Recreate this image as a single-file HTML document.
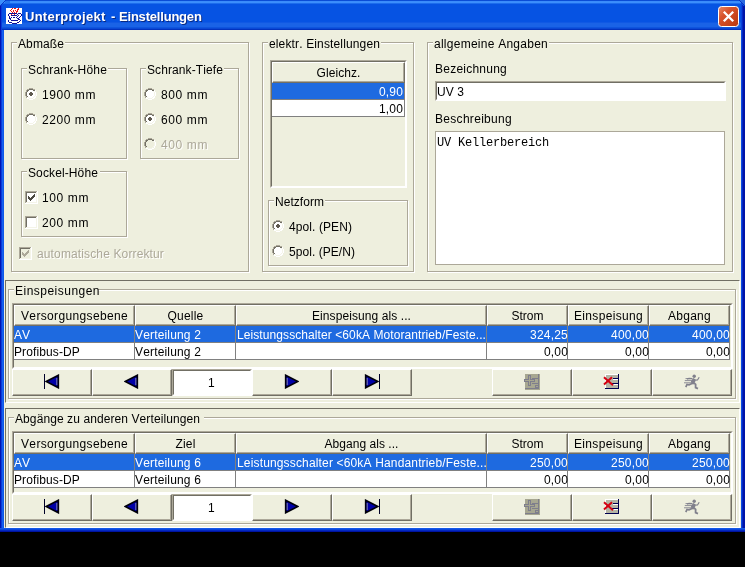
<!DOCTYPE html>
<html><head><meta charset="utf-8"><title>Unterprojekt - Einstellungen</title>
<style>
html,body{margin:0;padding:0;background:#000;}
body{width:745px;height:567px;overflow:hidden;position:relative;font-family:"Liberation Sans",sans-serif;font-size:12px;}
#win{position:absolute;left:0;top:0;width:745px;height:532px;overflow:hidden;
 background:linear-gradient(90deg,#0014B4 0,#0014B4 1px,#0A3CDA 1px,#0A3CDA 2px,#1560F0 2px,#1560F0 3px,#1058E8 3px,#1058E8 4px,#1058E8 741px,#0C4CE0 741px,#0C4CE0 742px,#0428C4 742px,#0428C4 743px,#0014A8 743px,#0014A8 745px);}
#win div,#win span,#win svg{position:absolute;}
#title{left:0;top:0;width:745px;height:30px;
 background:linear-gradient(180deg,#0A4CD6 0px,#0A4CD6 1px,#3A8BFA 1px,#3A8BFA 2px,#3C8EFC 2px,#3C8EFC 3px,#1C6CEC 3px,#1C6CEC 4px,#0653E3 4px,#0653E3 5px,#0653E3 5px,#0653E3 6px,#0653E3 6px,#0653E3 7px,#0653E3 7px,#0653E3 8px,#0653E3 8px,#0653E3 9px,#0653E3 9px,#0653E3 10px,#0653E3 10px,#0653E3 11px,#0653E3 11px,#0653E3 12px,#0653E3 12px,#0653E3 13px,#0653E3 13px,#0653E3 14px,#0653E3 14px,#0653E3 15px,#0653E3 15px,#0653E3 16px,#0653E3 16px,#0653E3 17px,#0653E3 17px,#0653E3 18px,#0653E3 18px,#0653E3 19px,#0653E3 19px,#0653E3 20px,#0653E3 20px,#0653E3 21px,#0653E3 21px,#0653E3 22px,#1059E4 22px,#1059E4 23px,#1A63E6 23px,#1A63E6 24px,#1A63E6 24px,#1A63E6 25px,#1A63E6 25px,#1A63E6 26px,#1A63E6 26px,#1A63E6 27px,#0E55DE 27px,#0E55DE 28px,#0A48D4 28px,#0A48D4 29px,#0232BE 29px,#0232BE 30px);}
.tt{top:9px;font-kerning:none;color:#fff;font-weight:bold;font-size:13px;line-height:16px;white-space:pre;text-shadow:1px 1px 0 #0A2A80;}
#txt{left:0;top:0;width:745px;height:532px;will-change:transform;}
#content{left:4px;top:30px;width:737px;height:498px;background:#EEEFDE;}
#win::after{content:"";position:absolute;left:0;top:528px;width:745px;height:4px;background:linear-gradient(180deg,#1458E6 0,#1458E6 1px,#0A46DC 1px,#0A46DC 2px,#0428C0 2px,#0428C0 3px,#0014A0 3px,#0014A0 4px);}
.t{font-kerning:none;font-variant-ligatures:none;line-height:14px;white-space:pre;font-size:12px;}
.m{font-family:"Liberation Mono",monospace;font-size:12px;letter-spacing:-0.2px;line-height:14px;white-space:pre;color:#000;}
</style></head>
<body>
<div id="win">
<div id="title"></div>
<svg style="left:6px;top:8px" width="16" height="16" viewBox="0 0 16 16" shape-rendering="crispEdges"><rect width="16" height="16" fill="#fff"/><rect x="6" y="0" width="1" height="1" fill="#F01010"/><rect x="8" y="0" width="1" height="1" fill="#F01010"/><rect x="9" y="0" width="1" height="1" fill="#F01010"/><rect x="12" y="0" width="1" height="1" fill="#F01010"/><rect x="5" y="1" width="1" height="1" fill="#F01010"/><rect x="11" y="1" width="1" height="1" fill="#F01010"/><rect x="12" y="1" width="1" height="1" fill="#F01010"/><rect x="4" y="2" width="1" height="1" fill="#F01010"/><rect x="7" y="2" width="1" height="1" fill="#F01010"/><rect x="9" y="2" width="1" height="1" fill="#F01010"/><rect x="11" y="2" width="1" height="1" fill="#F01010"/><rect x="5" y="3" width="1" height="1" fill="#F01010"/><rect x="7" y="3" width="1" height="1" fill="#F01010"/><rect x="10" y="3" width="1" height="1" fill="#F01010"/><rect x="11" y="3" width="1" height="1" fill="#F01010"/><rect x="6" y="4" width="1" height="1" fill="#F01010"/><rect x="8" y="4" width="1" height="1" fill="#F01010"/><rect x="10" y="4" width="1" height="1" fill="#F01010"/><rect x="5" y="6" width="1" height="1" fill="#F01010"/><rect x="8" y="6" width="1" height="1" fill="#F01010"/><rect x="3" y="5" width="1" height="1" fill="#101098"/><rect x="4" y="5" width="1" height="1" fill="#101098"/><rect x="5" y="5" width="1" height="1" fill="#101098"/><rect x="6" y="5" width="1" height="1" fill="#101098"/><rect x="7" y="5" width="1" height="1" fill="#101098"/><rect x="8" y="5" width="1" height="1" fill="#101098"/><rect x="9" y="5" width="1" height="1" fill="#101098"/><rect x="10" y="5" width="1" height="1" fill="#101098"/><rect x="12" y="5" width="1" height="1" fill="#101098"/><rect x="13" y="5" width="1" height="1" fill="#101098"/><rect x="14" y="5" width="1" height="1" fill="#101098"/><rect x="2" y="6" width="1" height="1" fill="#101098"/><rect x="11" y="6" width="1" height="1" fill="#101098"/><rect x="15" y="6" width="1" height="1" fill="#101098"/><rect x="2" y="7" width="1" height="1" fill="#101098"/><rect x="5" y="7" width="1" height="1" fill="#101098"/><rect x="6" y="7" width="1" height="1" fill="#101098"/><rect x="7" y="7" width="1" height="1" fill="#101098"/><rect x="8" y="7" width="1" height="1" fill="#101098"/><rect x="9" y="7" width="1" height="1" fill="#101098"/><rect x="10" y="7" width="1" height="1" fill="#101098"/><rect x="12" y="7" width="1" height="1" fill="#101098"/><rect x="15" y="7" width="1" height="1" fill="#101098"/><rect x="3" y="8" width="1" height="1" fill="#101098"/><rect x="11" y="8" width="1" height="1" fill="#101098"/><rect x="14" y="8" width="1" height="1" fill="#101098"/><rect x="3" y="9" width="1" height="1" fill="#101098"/><rect x="5" y="9" width="1" height="1" fill="#101098"/><rect x="7" y="9" width="1" height="1" fill="#101098"/><rect x="8" y="9" width="1" height="1" fill="#101098"/><rect x="10" y="9" width="1" height="1" fill="#101098"/><rect x="13" y="9" width="1" height="1" fill="#101098"/><rect x="3" y="10" width="1" height="1" fill="#101098"/><rect x="4" y="10" width="1" height="1" fill="#101098"/><rect x="11" y="10" width="1" height="1" fill="#101098"/><rect x="12" y="10" width="1" height="1" fill="#101098"/><rect x="4" y="11" width="1" height="1" fill="#101098"/><rect x="12" y="11" width="1" height="1" fill="#101098"/><rect x="13" y="11" width="1" height="1" fill="#101098"/><rect x="2" y="12" width="1" height="1" fill="#101098"/><rect x="5" y="12" width="1" height="1" fill="#101098"/><rect x="6" y="12" width="1" height="1" fill="#101098"/><rect x="7" y="12" width="1" height="1" fill="#101098"/><rect x="8" y="12" width="1" height="1" fill="#101098"/><rect x="9" y="12" width="1" height="1" fill="#101098"/><rect x="10" y="12" width="1" height="1" fill="#101098"/><rect x="11" y="12" width="1" height="1" fill="#101098"/><rect x="14" y="12" width="1" height="1" fill="#101098"/><rect x="2" y="13" width="1" height="1" fill="#101098"/><rect x="13" y="13" width="1" height="1" fill="#101098"/><rect x="3" y="14" width="1" height="1" fill="#101098"/><rect x="4" y="14" width="1" height="1" fill="#101098"/><rect x="5" y="14" width="1" height="1" fill="#101098"/><rect x="11" y="14" width="1" height="1" fill="#101098"/><rect x="12" y="14" width="1" height="1" fill="#101098"/><rect x="6" y="15" width="1" height="1" fill="#101098"/><rect x="7" y="15" width="1" height="1" fill="#101098"/><rect x="8" y="15" width="1" height="1" fill="#101098"/><rect x="9" y="15" width="1" height="1" fill="#101098"/><rect x="10" y="15" width="1" height="1" fill="#101098"/></svg>
<svg style="left:718px;top:6px" width="21" height="21" viewBox="0 0 21 21">
<defs><linearGradient id="cg" x1="0" y1="0" x2="1" y2="1"><stop offset="0" stop-color="#E88866"/><stop offset="0.35" stop-color="#D8532C"/><stop offset="1" stop-color="#B8370E"/></linearGradient></defs>
<rect x="0.5" y="0.5" width="20" height="20" rx="3" ry="3" fill="url(#cg)" stroke="#fff" stroke-width="1"/>
<path d="M5.800 5.800L15.200 15.200M15.200 5.800L5.800 15.200" stroke="#fff" stroke-width="2.300" stroke-linecap="butt"/>
</svg>
<div id="content"></div>
<div style="left:5px;top:1px;width:5px;height:2px;background:#2272EC;"></div>
<div style="left:0px;top:6px;width:1px;height:24px;background:#0014B4;"></div>
<div style="left:1px;top:5px;width:1px;height:25px;background:#0A3CDA;"></div>
<div style="left:741px;top:3px;width:1px;height:27px;background:#0A44DC;"></div>
<div style="left:742px;top:5px;width:1px;height:25px;background:#0428C4;"></div>
<div style="left:743px;top:6px;width:2px;height:24px;background:#0014A8;"></div>
<svg style="left:0;top:0" width="8" height="8" viewBox="0 0 8 8" shape-rendering="crispEdges"><path d="M0 0h5v1h-1v1h-1v1h-1v1h-1v1h-1z" fill="#3B8FFC"/><path d="M5 0h1v1h-1v1h-1v1h-1v1h-1v1h-1v1h-1v-1h1v-1h1v-1h1v-1h1v-1h1z" fill="#0838C8"/></svg>
<svg style="left:737px;top:0" width="8" height="8" viewBox="0 0 8 8" shape-rendering="crispEdges"><path d="M8 0h-5v1h1v1h1v1h1v1h1v1h1z" fill="#2A6AE0"/><path d="M3 0h-1v1h1v1h1v1h1v1h1v1h1v1h1v-1h-1v-1h-1v-1h-1v-1h-1v-1h-1z" fill="#0830C0"/></svg>
<div style="left:12px;top:43px;width:238px;height:230px;border:1px solid #FFFFFF;box-sizing:border-box;"></div>
<div style="left:11px;top:42px;width:238px;height:230px;border:1px solid #ACA899;box-sizing:border-box;"></div>
<div style="left:17px;top:42px;width:48px;height:2px;background:#EEEFDE;"></div>
<div style="left:22px;top:69px;width:106px;height:91px;border:1px solid #FFFFFF;box-sizing:border-box;"></div>
<div style="left:21px;top:68px;width:106px;height:91px;border:1px solid #ACA899;box-sizing:border-box;"></div>
<div style="left:27px;top:68px;width:81px;height:2px;background:#EEEFDE;"></div>
<svg style="left:25px;top:88px" width="12" height="12" viewBox="0 0 12 12" shape-rendering="crispEdges">
<path d="M4 1h4v1h2v2h1v4h-1v2h-2v1h-4v-1h-2v-2h-1v-4h1v-2h2z" fill="#fff"/>
<path d="M4 0h4v1h-4zM2 1h2v1h-2zM8 1h2v1h-2zM1 2h1v2h-1zM0 4h1v4h-1zM1 8h1v2h-1z" fill="#ACA899"/>
<path d="M4 1h4v1h-4zM2 2h2v1h-2zM8 2h2v1h-2zM2 3h1v1h-1zM1 4h1v4h-1zM2 8h1v1h-1z" fill="#716F64"/>
<path d="M10 2h1v2h-1zM11 4h1v4h-1zM10 8h1v2h-1zM8 10h2v1h-2zM2 10h2v1h-2zM4 11h4v1h-4z" fill="#FFFFFF"/>
<path d="M9 3h1v1h-1zM10 4h1v4h-1zM9 8h1v1h-1zM8 9h1v1h-1zM3 9h1v1h-1zM4 10h4v1h-4z" fill="#F4F4E8"/>
<rect x="5" y="4" width="2" height="4" fill="#5E594F"/><rect x="4" y="5" width="4" height="2" fill="#5E594F"/></svg>
<svg style="left:25px;top:113px" width="12" height="12" viewBox="0 0 12 12" shape-rendering="crispEdges">
<path d="M4 1h4v1h2v2h1v4h-1v2h-2v1h-4v-1h-2v-2h-1v-4h1v-2h2z" fill="#fff"/>
<path d="M4 0h4v1h-4zM2 1h2v1h-2zM8 1h2v1h-2zM1 2h1v2h-1zM0 4h1v4h-1zM1 8h1v2h-1z" fill="#ACA899"/>
<path d="M4 1h4v1h-4zM2 2h2v1h-2zM8 2h2v1h-2zM2 3h1v1h-1zM1 4h1v4h-1zM2 8h1v1h-1z" fill="#716F64"/>
<path d="M10 2h1v2h-1zM11 4h1v4h-1zM10 8h1v2h-1zM8 10h2v1h-2zM2 10h2v1h-2zM4 11h4v1h-4z" fill="#FFFFFF"/>
<path d="M9 3h1v1h-1zM10 4h1v4h-1zM9 8h1v1h-1zM8 9h1v1h-1zM3 9h1v1h-1zM4 10h4v1h-4z" fill="#F4F4E8"/>
</svg>
<div style="left:141px;top:69px;width:99px;height:91px;border:1px solid #FFFFFF;box-sizing:border-box;"></div>
<div style="left:140px;top:68px;width:99px;height:91px;border:1px solid #ACA899;box-sizing:border-box;"></div>
<div style="left:146px;top:68px;width:78px;height:2px;background:#EEEFDE;"></div>
<svg style="left:144px;top:88px" width="12" height="12" viewBox="0 0 12 12" shape-rendering="crispEdges">
<path d="M4 1h4v1h2v2h1v4h-1v2h-2v1h-4v-1h-2v-2h-1v-4h1v-2h2z" fill="#fff"/>
<path d="M4 0h4v1h-4zM2 1h2v1h-2zM8 1h2v1h-2zM1 2h1v2h-1zM0 4h1v4h-1zM1 8h1v2h-1z" fill="#ACA899"/>
<path d="M4 1h4v1h-4zM2 2h2v1h-2zM8 2h2v1h-2zM2 3h1v1h-1zM1 4h1v4h-1zM2 8h1v1h-1z" fill="#716F64"/>
<path d="M10 2h1v2h-1zM11 4h1v4h-1zM10 8h1v2h-1zM8 10h2v1h-2zM2 10h2v1h-2zM4 11h4v1h-4z" fill="#FFFFFF"/>
<path d="M9 3h1v1h-1zM10 4h1v4h-1zM9 8h1v1h-1zM8 9h1v1h-1zM3 9h1v1h-1zM4 10h4v1h-4z" fill="#F4F4E8"/>
</svg>
<svg style="left:144px;top:113px" width="12" height="12" viewBox="0 0 12 12" shape-rendering="crispEdges">
<path d="M4 1h4v1h2v2h1v4h-1v2h-2v1h-4v-1h-2v-2h-1v-4h1v-2h2z" fill="#fff"/>
<path d="M4 0h4v1h-4zM2 1h2v1h-2zM8 1h2v1h-2zM1 2h1v2h-1zM0 4h1v4h-1zM1 8h1v2h-1z" fill="#ACA899"/>
<path d="M4 1h4v1h-4zM2 2h2v1h-2zM8 2h2v1h-2zM2 3h1v1h-1zM1 4h1v4h-1zM2 8h1v1h-1z" fill="#716F64"/>
<path d="M10 2h1v2h-1zM11 4h1v4h-1zM10 8h1v2h-1zM8 10h2v1h-2zM2 10h2v1h-2zM4 11h4v1h-4z" fill="#FFFFFF"/>
<path d="M9 3h1v1h-1zM10 4h1v4h-1zM9 8h1v1h-1zM8 9h1v1h-1zM3 9h1v1h-1zM4 10h4v1h-4z" fill="#F4F4E8"/>
<rect x="5" y="4" width="2" height="4" fill="#5E594F"/><rect x="4" y="5" width="4" height="2" fill="#5E594F"/></svg>
<svg style="left:144px;top:138px" width="12" height="12" viewBox="0 0 12 12" shape-rendering="crispEdges">
<path d="M4 1h4v1h2v2h1v4h-1v2h-2v1h-4v-1h-2v-2h-1v-4h1v-2h2z" fill="#EEEFDE"/>
<path d="M4 0h4v1h-4zM2 1h2v1h-2zM8 1h2v1h-2zM1 2h1v2h-1zM0 4h1v4h-1zM1 8h1v2h-1z" fill="#ACA899"/>
<path d="M4 1h4v1h-4zM2 2h2v1h-2zM8 2h2v1h-2zM2 3h1v1h-1zM1 4h1v4h-1zM2 8h1v1h-1z" fill="#716F64"/>
<path d="M10 2h1v2h-1zM11 4h1v4h-1zM10 8h1v2h-1zM8 10h2v1h-2zM2 10h2v1h-2zM4 11h4v1h-4z" fill="#FFFFFF"/>
<path d="M9 3h1v1h-1zM10 4h1v4h-1zM9 8h1v1h-1zM8 9h1v1h-1zM3 9h1v1h-1zM4 10h4v1h-4z" fill="#F4F4E8"/>
</svg>
<div style="left:22px;top:172px;width:106px;height:66px;border:1px solid #FFFFFF;box-sizing:border-box;"></div>
<div style="left:21px;top:171px;width:106px;height:66px;border:1px solid #ACA899;box-sizing:border-box;"></div>
<div style="left:27px;top:171px;width:73px;height:2px;background:#EEEFDE;"></div>
<svg style="left:25px;top:191px" width="13" height="13" viewBox="0 0 13 13" shape-rendering="crispEdges">
<rect x="0" y="0" width="13" height="13" fill="#FFFFFF"/>
<rect x="0" y="0" width="12" height="12" fill="#ACA899"/>
<rect x="1" y="1" width="11" height="11" fill="#F4F4E8"/>
<rect x="1" y="1" width="10" height="10" fill="#716F64"/>
<rect x="2" y="2" width="9" height="9" fill="#fff"/>
<path d="M3 5h1v3h-1zM4 6h1v3h-1zM5 7h1v3h-1zM6 6h1v3h-1zM7 5h1v3h-1zM8 4h1v3h-1zM9 3h1v3h-1z" fill="#4A4840"/></svg>
<svg style="left:25px;top:216px" width="13" height="13" viewBox="0 0 13 13" shape-rendering="crispEdges">
<rect x="0" y="0" width="13" height="13" fill="#FFFFFF"/>
<rect x="0" y="0" width="12" height="12" fill="#ACA899"/>
<rect x="1" y="1" width="11" height="11" fill="#F4F4E8"/>
<rect x="1" y="1" width="10" height="10" fill="#716F64"/>
<rect x="2" y="2" width="9" height="9" fill="#fff"/>
</svg>
<svg style="left:19px;top:247px" width="13" height="13" viewBox="0 0 13 13" shape-rendering="crispEdges">
<rect x="0" y="0" width="13" height="13" fill="#FFFFFF"/>
<rect x="0" y="0" width="12" height="12" fill="#ACA899"/>
<rect x="1" y="1" width="11" height="11" fill="#F4F4E8"/>
<rect x="1" y="1" width="10" height="10" fill="#716F64"/>
<rect x="2" y="2" width="9" height="9" fill="#EEEFDE"/>
<path d="M3 5h1v3h-1zM4 6h1v3h-1zM5 7h1v3h-1zM6 6h1v3h-1zM7 5h1v3h-1zM8 4h1v3h-1zM9 3h1v3h-1z" fill="#ACA899"/></svg>
<div style="left:263px;top:43px;width:152px;height:230px;border:1px solid #FFFFFF;box-sizing:border-box;"></div>
<div style="left:262px;top:42px;width:152px;height:230px;border:1px solid #ACA899;box-sizing:border-box;"></div>
<div style="left:268px;top:42px;width:113px;height:2px;background:#EEEFDE;"></div>
<div style="left:270px;top:60px;width:137px;height:128px;box-sizing:border-box;border-top:1px solid #ACA899;border-left:1px solid #ACA899;border-bottom:1px solid #FFFFFF;border-right:1px solid #FFFFFF;"></div>
<div style="left:271px;top:61px;width:135px;height:126px;box-sizing:border-box;background:#EEEFDE;border-top:1px solid #716F64;border-left:1px solid #716F64;border-bottom:1px solid #FFFFFF;border-right:1px solid #FFFFFF;"></div>
<div style="left:272px;top:62px;width:133px;height:21px;box-sizing:border-box;background:#EEEFDE;border-top:1px solid #FFFFFF;border-left:1px solid #FFFFFF;border-bottom:1px solid #716F64;border-right:1px solid #716F64;"></div>
<div style="left:273px;top:63px;width:131px;height:19px;box-sizing:border-box;border-bottom:1px solid #ACA899;border-right:1px solid #ACA899;"></div>
<div style="left:272px;top:83px;width:133px;height:16px;background:#1E6AE0;"></div>
<div style="left:272px;top:100px;width:133px;height:17px;background:#fff;border-bottom:1px solid #808080;box-sizing:border-box;"></div>
<div style="left:272px;top:99px;width:133px;height:1px;background:#808080;"></div>
<div style="left:404px;top:83px;width:1px;height:34px;background:#808080;"></div>
<div style="left:269px;top:201px;width:140px;height:66px;border:1px solid #FFFFFF;box-sizing:border-box;"></div>
<div style="left:268px;top:200px;width:140px;height:66px;border:1px solid #ACA899;box-sizing:border-box;"></div>
<div style="left:274px;top:200px;width:51px;height:2px;background:#EEEFDE;"></div>
<svg style="left:272px;top:220px" width="12" height="12" viewBox="0 0 12 12" shape-rendering="crispEdges">
<path d="M4 1h4v1h2v2h1v4h-1v2h-2v1h-4v-1h-2v-2h-1v-4h1v-2h2z" fill="#fff"/>
<path d="M4 0h4v1h-4zM2 1h2v1h-2zM8 1h2v1h-2zM1 2h1v2h-1zM0 4h1v4h-1zM1 8h1v2h-1z" fill="#ACA899"/>
<path d="M4 1h4v1h-4zM2 2h2v1h-2zM8 2h2v1h-2zM2 3h1v1h-1zM1 4h1v4h-1zM2 8h1v1h-1z" fill="#716F64"/>
<path d="M10 2h1v2h-1zM11 4h1v4h-1zM10 8h1v2h-1zM8 10h2v1h-2zM2 10h2v1h-2zM4 11h4v1h-4z" fill="#FFFFFF"/>
<path d="M9 3h1v1h-1zM10 4h1v4h-1zM9 8h1v1h-1zM8 9h1v1h-1zM3 9h1v1h-1zM4 10h4v1h-4z" fill="#F4F4E8"/>
<rect x="5" y="4" width="2" height="4" fill="#5E594F"/><rect x="4" y="5" width="4" height="2" fill="#5E594F"/></svg>
<svg style="left:272px;top:245px" width="12" height="12" viewBox="0 0 12 12" shape-rendering="crispEdges">
<path d="M4 1h4v1h2v2h1v4h-1v2h-2v1h-4v-1h-2v-2h-1v-4h1v-2h2z" fill="#fff"/>
<path d="M4 0h4v1h-4zM2 1h2v1h-2zM8 1h2v1h-2zM1 2h1v2h-1zM0 4h1v4h-1zM1 8h1v2h-1z" fill="#ACA899"/>
<path d="M4 1h4v1h-4zM2 2h2v1h-2zM8 2h2v1h-2zM2 3h1v1h-1zM1 4h1v4h-1zM2 8h1v1h-1z" fill="#716F64"/>
<path d="M10 2h1v2h-1zM11 4h1v4h-1zM10 8h1v2h-1zM8 10h2v1h-2zM2 10h2v1h-2zM4 11h4v1h-4z" fill="#FFFFFF"/>
<path d="M9 3h1v1h-1zM10 4h1v4h-1zM9 8h1v1h-1zM8 9h1v1h-1zM3 9h1v1h-1zM4 10h4v1h-4z" fill="#F4F4E8"/>
</svg>
<div style="left:428px;top:43px;width:306px;height:230px;border:1px solid #FFFFFF;box-sizing:border-box;"></div>
<div style="left:427px;top:42px;width:306px;height:230px;border:1px solid #ACA899;box-sizing:border-box;"></div>
<div style="left:433px;top:42px;width:116px;height:2px;background:#EEEFDE;"></div>
<div style="left:435px;top:81px;width:291px;height:20px;box-sizing:border-box;border-top:1px solid #ACA899;border-left:1px solid #ACA899;border-bottom:1px solid #FFFFFF;border-right:1px solid #FFFFFF;"></div>
<div style="left:436px;top:82px;width:289px;height:18px;box-sizing:border-box;background:#fff;border-top:1px solid #716F64;border-left:1px solid #716F64;border-bottom:1px solid #FFFFFF;border-right:1px solid #FFFFFF;"></div>
<div style="left:435px;top:131px;width:290px;height:134px;box-sizing:border-box;background:#fff;border:1px solid #ACA899;"></div>
<div style="left:5px;top:280px;width:735px;height:123px;box-sizing:border-box;border-top:1px solid #716F64;border-left:1px solid #716F64;border-bottom:1px solid #FFFFFF;border-right:1px solid #FFFFFF;"></div>
<div style="left:9px;top:290px;width:728px;height:110px;border:1px solid #FFFFFF;box-sizing:border-box;"></div>
<div style="left:8px;top:289px;width:728px;height:110px;border:1px solid #ACA899;box-sizing:border-box;"></div>
<div style="left:14px;top:289px;width:84px;height:2px;background:#EEEFDE;"></div>
<div style="left:12px;top:303px;width:721px;height:66px;box-sizing:border-box;border-top:1px solid #ACA899;border-left:1px solid #ACA899;border-bottom:1px solid #FFFFFF;border-right:1px solid #FFFFFF;"></div>
<div style="left:13px;top:304px;width:719px;height:64px;box-sizing:border-box;background:#EEEFDE;border-top:1px solid #716F64;border-left:1px solid #716F64;border-bottom:1px solid #FFFFFF;border-right:1px solid #FFFFFF;"></div>
<div style="left:14px;top:305px;width:121px;height:21px;box-sizing:border-box;background:#EEEFDE;border-top:1px solid #FFFFFF;border-left:1px solid #FFFFFF;border-bottom:1px solid #716F64;border-right:1px solid #716F64;"></div>
<div style="left:15px;top:306px;width:119px;height:19px;box-sizing:border-box;border-bottom:1px solid #ACA899;border-right:1px solid #ACA899;"></div>
<div style="left:135px;top:305px;width:101px;height:21px;box-sizing:border-box;background:#EEEFDE;border-top:1px solid #FFFFFF;border-left:1px solid #FFFFFF;border-bottom:1px solid #716F64;border-right:1px solid #716F64;"></div>
<div style="left:136px;top:306px;width:99px;height:19px;box-sizing:border-box;border-bottom:1px solid #ACA899;border-right:1px solid #ACA899;"></div>
<div style="left:236px;top:305px;width:251px;height:21px;box-sizing:border-box;background:#EEEFDE;border-top:1px solid #FFFFFF;border-left:1px solid #FFFFFF;border-bottom:1px solid #716F64;border-right:1px solid #716F64;"></div>
<div style="left:237px;top:306px;width:249px;height:19px;box-sizing:border-box;border-bottom:1px solid #ACA899;border-right:1px solid #ACA899;"></div>
<div style="left:487px;top:305px;width:81px;height:21px;box-sizing:border-box;background:#EEEFDE;border-top:1px solid #FFFFFF;border-left:1px solid #FFFFFF;border-bottom:1px solid #716F64;border-right:1px solid #716F64;"></div>
<div style="left:488px;top:306px;width:79px;height:19px;box-sizing:border-box;border-bottom:1px solid #ACA899;border-right:1px solid #ACA899;"></div>
<div style="left:568px;top:305px;width:81px;height:21px;box-sizing:border-box;background:#EEEFDE;border-top:1px solid #FFFFFF;border-left:1px solid #FFFFFF;border-bottom:1px solid #716F64;border-right:1px solid #716F64;"></div>
<div style="left:569px;top:306px;width:79px;height:19px;box-sizing:border-box;border-bottom:1px solid #ACA899;border-right:1px solid #ACA899;"></div>
<div style="left:649px;top:305px;width:81px;height:21px;box-sizing:border-box;background:#EEEFDE;border-top:1px solid #FFFFFF;border-left:1px solid #FFFFFF;border-bottom:1px solid #716F64;border-right:1px solid #716F64;"></div>
<div style="left:650px;top:306px;width:79px;height:19px;box-sizing:border-box;border-bottom:1px solid #ACA899;border-right:1px solid #ACA899;"></div>
<div style="left:14px;top:326px;width:716px;height:17px;background:#1E6AE0;"></div>
<div style="left:14px;top:343px;width:716px;height:17px;background:#fff;"></div>
<div style="left:14px;top:342px;width:716px;height:1px;background:#808080;"></div>
<div style="left:14px;top:359px;width:716px;height:1px;background:#808080;"></div>
<div style="left:134px;top:326px;width:1px;height:34px;background:#808080;"></div>
<div style="left:235px;top:326px;width:1px;height:34px;background:#808080;"></div>
<div style="left:486px;top:326px;width:1px;height:34px;background:#808080;"></div>
<div style="left:567px;top:326px;width:1px;height:34px;background:#808080;"></div>
<div style="left:648px;top:326px;width:1px;height:34px;background:#808080;"></div>
<div style="left:729px;top:326px;width:1px;height:34px;background:#808080;"></div>
<div style="left:12px;top:369px;width:80px;height:27px;box-sizing:border-box;background:#EEEFDE;border-top:1px solid #FFFFFF;border-left:1px solid #FFFFFF;border-bottom:1px solid #716F64;border-right:1px solid #716F64;"></div>
<div style="left:13px;top:370px;width:78px;height:25px;box-sizing:border-box;border-bottom:1px solid #ACA899;border-right:1px solid #ACA899;"></div>
<div style="left:92px;top:369px;width:80px;height:27px;box-sizing:border-box;background:#EEEFDE;border-top:1px solid #FFFFFF;border-left:1px solid #FFFFFF;border-bottom:1px solid #716F64;border-right:1px solid #716F64;"></div>
<div style="left:93px;top:370px;width:78px;height:25px;box-sizing:border-box;border-bottom:1px solid #ACA899;border-right:1px solid #ACA899;"></div>
<div style="left:252px;top:369px;width:80px;height:27px;box-sizing:border-box;background:#EEEFDE;border-top:1px solid #FFFFFF;border-left:1px solid #FFFFFF;border-bottom:1px solid #716F64;border-right:1px solid #716F64;"></div>
<div style="left:253px;top:370px;width:78px;height:25px;box-sizing:border-box;border-bottom:1px solid #ACA899;border-right:1px solid #ACA899;"></div>
<div style="left:332px;top:369px;width:80px;height:27px;box-sizing:border-box;background:#EEEFDE;border-top:1px solid #FFFFFF;border-left:1px solid #FFFFFF;border-bottom:1px solid #716F64;border-right:1px solid #716F64;"></div>
<div style="left:333px;top:370px;width:78px;height:25px;box-sizing:border-box;border-bottom:1px solid #ACA899;border-right:1px solid #ACA899;"></div>
<div style="left:492px;top:369px;width:80px;height:27px;box-sizing:border-box;background:#EEEFDE;border-top:1px solid #FFFFFF;border-left:1px solid #FFFFFF;border-bottom:1px solid #716F64;border-right:1px solid #716F64;"></div>
<div style="left:493px;top:370px;width:78px;height:25px;box-sizing:border-box;border-bottom:1px solid #ACA899;border-right:1px solid #ACA899;"></div>
<div style="left:572px;top:369px;width:80px;height:27px;box-sizing:border-box;background:#EEEFDE;border-top:1px solid #FFFFFF;border-left:1px solid #FFFFFF;border-bottom:1px solid #716F64;border-right:1px solid #716F64;"></div>
<div style="left:573px;top:370px;width:78px;height:25px;box-sizing:border-box;border-bottom:1px solid #ACA899;border-right:1px solid #ACA899;"></div>
<div style="left:652px;top:369px;width:80px;height:27px;box-sizing:border-box;background:#EEEFDE;border-top:1px solid #FFFFFF;border-left:1px solid #FFFFFF;border-bottom:1px solid #716F64;border-right:1px solid #716F64;"></div>
<div style="left:653px;top:370px;width:78px;height:25px;box-sizing:border-box;border-bottom:1px solid #ACA899;border-right:1px solid #ACA899;"></div>
<div style="left:172px;top:369px;width:80px;height:27px;box-sizing:border-box;border-top:1px solid #ACA899;border-left:1px solid #ACA899;border-bottom:1px solid #FFFFFF;border-right:1px solid #FFFFFF;"></div>
<div style="left:173px;top:370px;width:78px;height:25px;box-sizing:border-box;background:#fff;border-top:1px solid #716F64;border-left:1px solid #716F64;border-bottom:1px solid #FFFFFF;border-right:1px solid #FFFFFF;"></div>
<div style="left:44px;top:374px;width:1px;height:15px;background:#000028;"></div>
<svg style="left:45px;top:374px" width="15" height="15" viewBox="0 0 15 15"><polygon points="1.2,7.5 13.3,1.3 13.3,13.700" fill="#0000A8" stroke="#00000C" stroke-width="1.700" stroke-linejoin="miter"/><line x1="11.800" y1="4" x2="11.800" y2="11" stroke="#8C8CB0" stroke-width="0.9"/></svg>
<svg style="left:124px;top:374px" width="15" height="15" viewBox="0 0 15 15"><polygon points="1.2,7.5 13.3,1.3 13.3,13.700" fill="#0000A8" stroke="#00000C" stroke-width="1.700" stroke-linejoin="miter"/><line x1="11.800" y1="4" x2="11.800" y2="11" stroke="#8C8CB0" stroke-width="0.9"/></svg>
<svg style="left:284px;top:374px" width="15" height="15" viewBox="0 0 15 15"><polygon points="13.800,7.5 1.700,1.3 1.700,13.700" fill="#0000A8" stroke="#00000C" stroke-width="1.700" stroke-linejoin="miter"/><line x1="3.2" y1="4" x2="3.2" y2="11" stroke="#8C8CB0" stroke-width="0.9"/></svg>
<svg style="left:364px;top:374px" width="15" height="15" viewBox="0 0 15 15"><polygon points="13.800,7.5 1.700,1.3 1.700,13.700" fill="#0000A8" stroke="#00000C" stroke-width="1.700" stroke-linejoin="miter"/><line x1="3.2" y1="4" x2="3.2" y2="11" stroke="#8C8CB0" stroke-width="0.9"/></svg>
<div style="left:379px;top:374px;width:1px;height:15px;background:#000028;"></div>
<svg style="left:524px;top:374px" width="16" height="16" viewBox="0 0 16 16" shape-rendering="crispEdges">
<rect x="1" y="0" width="15" height="16" fill="#A7A791"/>
<rect x="8" y="4" width="6" height="1" fill="#7E7E8C"/><rect x="8" y="9" width="6" height="1" fill="#7E7E8C"/>
<rect x="14" y="0" width="1" height="15" fill="#7E7E8C"/><rect x="1" y="14" width="14" height="1" fill="#7E7E8C"/>
<rect x="4" y="1" width="3" height="11" fill="#7E7E8C"/><rect x="0" y="5" width="11" height="3" fill="#7E7E8C"/>
<rect x="5" y="2" width="1" height="9" fill="#A7A791"/><rect x="1" y="6" width="9" height="1" fill="#A7A791"/>
<rect x="11" y="11" width="1" height="3" fill="#7E7E8C"/><rect x="12" y="11" width="2" height="1" fill="#7E7E8C"/><rect x="12" y="13" width="2" height="1" fill="#7E7E8C"/>
</svg>
<svg style="left:603px;top:374px" width="17" height="16" viewBox="0 0 17 16">
<g shape-rendering="crispEdges"><rect x="2" y="0" width="14" height="15" fill="#B4B4A4"/>
<rect x="2" y="0" width="13" height="1" fill="#fff"/><rect x="2" y="0" width="1" height="14" fill="#fff"/>
<rect x="15" y="0" width="1" height="15" fill="#000050"/><rect x="2" y="14" width="14" height="1" fill="#000050"/>
<rect x="10" y="4" width="5" height="1" fill="#000050"/><rect x="10" y="5" width="5" height="1" fill="#fff"/>
<rect x="9" y="9" width="6" height="1" fill="#000050"/><rect x="9" y="10" width="6" height="1" fill="#fff"/></g>
<path d="M1 3.2L10 11.2M9 3.2L1 10.5" stroke="#D40010" stroke-width="2" fill="none"/>
</svg>
<svg style="left:683px;top:374px" width="18" height="16" viewBox="0 0 18 16">
<circle cx="11.2" cy="2.3" r="1.7" fill="#80808C"/>
<path d="M10.5 4 L8 6.5 L8.2 10 L10.5 10.5 L12.2 8 L12.5 5.5 Z" fill="#80808C"/>
<path d="M12 6.2 L14.5 6 L16.2 3.3" stroke="#80808C" stroke-width="1.2" fill="none"/>
<path d="M9.5 4.6 L6 4.4 L4 5.2" stroke="#80808C" stroke-width="1.3" fill="none"/>
<path d="M9 9.5 L6 10.8 L4 10.5 L2.8 13.2" stroke="#80808C" stroke-width="1.7" fill="none"/>
<path d="M11 9 L12.6 10.4 L12.6 13.6 L15 14.6" stroke="#80808C" stroke-width="1.8" fill="none"/>
<path d="M2.5 4.6H8M1.8 6.6H8M1 8.8H8" stroke="#80808C" stroke-width="0.9" fill="none"/>
</svg>
<div style="left:5px;top:408px;width:735px;height:120px;box-sizing:border-box;border-top:1px solid #716F64;border-left:1px solid #716F64;border-bottom:1px solid #FFFFFF;border-right:1px solid #FFFFFF;"></div>
<div style="left:9px;top:418px;width:728px;height:107px;border:1px solid #FFFFFF;box-sizing:border-box;"></div>
<div style="left:8px;top:417px;width:728px;height:107px;border:1px solid #ACA899;box-sizing:border-box;"></div>
<div style="left:14px;top:417px;width:190px;height:2px;background:#EEEFDE;"></div>
<div style="left:12px;top:431px;width:721px;height:63px;box-sizing:border-box;border-top:1px solid #ACA899;border-left:1px solid #ACA899;border-bottom:1px solid #FFFFFF;border-right:1px solid #FFFFFF;"></div>
<div style="left:13px;top:432px;width:719px;height:61px;box-sizing:border-box;background:#EEEFDE;border-top:1px solid #716F64;border-left:1px solid #716F64;border-bottom:1px solid #FFFFFF;border-right:1px solid #FFFFFF;"></div>
<div style="left:14px;top:433px;width:121px;height:21px;box-sizing:border-box;background:#EEEFDE;border-top:1px solid #FFFFFF;border-left:1px solid #FFFFFF;border-bottom:1px solid #716F64;border-right:1px solid #716F64;"></div>
<div style="left:15px;top:434px;width:119px;height:19px;box-sizing:border-box;border-bottom:1px solid #ACA899;border-right:1px solid #ACA899;"></div>
<div style="left:135px;top:433px;width:101px;height:21px;box-sizing:border-box;background:#EEEFDE;border-top:1px solid #FFFFFF;border-left:1px solid #FFFFFF;border-bottom:1px solid #716F64;border-right:1px solid #716F64;"></div>
<div style="left:136px;top:434px;width:99px;height:19px;box-sizing:border-box;border-bottom:1px solid #ACA899;border-right:1px solid #ACA899;"></div>
<div style="left:236px;top:433px;width:251px;height:21px;box-sizing:border-box;background:#EEEFDE;border-top:1px solid #FFFFFF;border-left:1px solid #FFFFFF;border-bottom:1px solid #716F64;border-right:1px solid #716F64;"></div>
<div style="left:237px;top:434px;width:249px;height:19px;box-sizing:border-box;border-bottom:1px solid #ACA899;border-right:1px solid #ACA899;"></div>
<div style="left:487px;top:433px;width:81px;height:21px;box-sizing:border-box;background:#EEEFDE;border-top:1px solid #FFFFFF;border-left:1px solid #FFFFFF;border-bottom:1px solid #716F64;border-right:1px solid #716F64;"></div>
<div style="left:488px;top:434px;width:79px;height:19px;box-sizing:border-box;border-bottom:1px solid #ACA899;border-right:1px solid #ACA899;"></div>
<div style="left:568px;top:433px;width:81px;height:21px;box-sizing:border-box;background:#EEEFDE;border-top:1px solid #FFFFFF;border-left:1px solid #FFFFFF;border-bottom:1px solid #716F64;border-right:1px solid #716F64;"></div>
<div style="left:569px;top:434px;width:79px;height:19px;box-sizing:border-box;border-bottom:1px solid #ACA899;border-right:1px solid #ACA899;"></div>
<div style="left:649px;top:433px;width:81px;height:21px;box-sizing:border-box;background:#EEEFDE;border-top:1px solid #FFFFFF;border-left:1px solid #FFFFFF;border-bottom:1px solid #716F64;border-right:1px solid #716F64;"></div>
<div style="left:650px;top:434px;width:79px;height:19px;box-sizing:border-box;border-bottom:1px solid #ACA899;border-right:1px solid #ACA899;"></div>
<div style="left:14px;top:454px;width:716px;height:17px;background:#1E6AE0;"></div>
<div style="left:14px;top:471px;width:716px;height:17px;background:#fff;"></div>
<div style="left:14px;top:470px;width:716px;height:1px;background:#808080;"></div>
<div style="left:14px;top:487px;width:716px;height:1px;background:#808080;"></div>
<div style="left:134px;top:454px;width:1px;height:34px;background:#808080;"></div>
<div style="left:235px;top:454px;width:1px;height:34px;background:#808080;"></div>
<div style="left:486px;top:454px;width:1px;height:34px;background:#808080;"></div>
<div style="left:567px;top:454px;width:1px;height:34px;background:#808080;"></div>
<div style="left:648px;top:454px;width:1px;height:34px;background:#808080;"></div>
<div style="left:729px;top:454px;width:1px;height:34px;background:#808080;"></div>
<div style="left:12px;top:494px;width:80px;height:27px;box-sizing:border-box;background:#EEEFDE;border-top:1px solid #FFFFFF;border-left:1px solid #FFFFFF;border-bottom:1px solid #716F64;border-right:1px solid #716F64;"></div>
<div style="left:13px;top:495px;width:78px;height:25px;box-sizing:border-box;border-bottom:1px solid #ACA899;border-right:1px solid #ACA899;"></div>
<div style="left:92px;top:494px;width:80px;height:27px;box-sizing:border-box;background:#EEEFDE;border-top:1px solid #FFFFFF;border-left:1px solid #FFFFFF;border-bottom:1px solid #716F64;border-right:1px solid #716F64;"></div>
<div style="left:93px;top:495px;width:78px;height:25px;box-sizing:border-box;border-bottom:1px solid #ACA899;border-right:1px solid #ACA899;"></div>
<div style="left:252px;top:494px;width:80px;height:27px;box-sizing:border-box;background:#EEEFDE;border-top:1px solid #FFFFFF;border-left:1px solid #FFFFFF;border-bottom:1px solid #716F64;border-right:1px solid #716F64;"></div>
<div style="left:253px;top:495px;width:78px;height:25px;box-sizing:border-box;border-bottom:1px solid #ACA899;border-right:1px solid #ACA899;"></div>
<div style="left:332px;top:494px;width:80px;height:27px;box-sizing:border-box;background:#EEEFDE;border-top:1px solid #FFFFFF;border-left:1px solid #FFFFFF;border-bottom:1px solid #716F64;border-right:1px solid #716F64;"></div>
<div style="left:333px;top:495px;width:78px;height:25px;box-sizing:border-box;border-bottom:1px solid #ACA899;border-right:1px solid #ACA899;"></div>
<div style="left:492px;top:494px;width:80px;height:27px;box-sizing:border-box;background:#EEEFDE;border-top:1px solid #FFFFFF;border-left:1px solid #FFFFFF;border-bottom:1px solid #716F64;border-right:1px solid #716F64;"></div>
<div style="left:493px;top:495px;width:78px;height:25px;box-sizing:border-box;border-bottom:1px solid #ACA899;border-right:1px solid #ACA899;"></div>
<div style="left:572px;top:494px;width:80px;height:27px;box-sizing:border-box;background:#EEEFDE;border-top:1px solid #FFFFFF;border-left:1px solid #FFFFFF;border-bottom:1px solid #716F64;border-right:1px solid #716F64;"></div>
<div style="left:573px;top:495px;width:78px;height:25px;box-sizing:border-box;border-bottom:1px solid #ACA899;border-right:1px solid #ACA899;"></div>
<div style="left:652px;top:494px;width:80px;height:27px;box-sizing:border-box;background:#EEEFDE;border-top:1px solid #FFFFFF;border-left:1px solid #FFFFFF;border-bottom:1px solid #716F64;border-right:1px solid #716F64;"></div>
<div style="left:653px;top:495px;width:78px;height:25px;box-sizing:border-box;border-bottom:1px solid #ACA899;border-right:1px solid #ACA899;"></div>
<div style="left:172px;top:494px;width:80px;height:27px;box-sizing:border-box;border-top:1px solid #ACA899;border-left:1px solid #ACA899;border-bottom:1px solid #FFFFFF;border-right:1px solid #FFFFFF;"></div>
<div style="left:173px;top:495px;width:78px;height:25px;box-sizing:border-box;background:#fff;border-top:1px solid #716F64;border-left:1px solid #716F64;border-bottom:1px solid #FFFFFF;border-right:1px solid #FFFFFF;"></div>
<div style="left:44px;top:499px;width:1px;height:15px;background:#000028;"></div>
<svg style="left:45px;top:499px" width="15" height="15" viewBox="0 0 15 15"><polygon points="1.2,7.5 13.3,1.3 13.3,13.700" fill="#0000A8" stroke="#00000C" stroke-width="1.700" stroke-linejoin="miter"/><line x1="11.800" y1="4" x2="11.800" y2="11" stroke="#8C8CB0" stroke-width="0.9"/></svg>
<svg style="left:124px;top:499px" width="15" height="15" viewBox="0 0 15 15"><polygon points="1.2,7.5 13.3,1.3 13.3,13.700" fill="#0000A8" stroke="#00000C" stroke-width="1.700" stroke-linejoin="miter"/><line x1="11.800" y1="4" x2="11.800" y2="11" stroke="#8C8CB0" stroke-width="0.9"/></svg>
<svg style="left:284px;top:499px" width="15" height="15" viewBox="0 0 15 15"><polygon points="13.800,7.5 1.700,1.3 1.700,13.700" fill="#0000A8" stroke="#00000C" stroke-width="1.700" stroke-linejoin="miter"/><line x1="3.2" y1="4" x2="3.2" y2="11" stroke="#8C8CB0" stroke-width="0.9"/></svg>
<svg style="left:364px;top:499px" width="15" height="15" viewBox="0 0 15 15"><polygon points="13.800,7.5 1.700,1.3 1.700,13.700" fill="#0000A8" stroke="#00000C" stroke-width="1.700" stroke-linejoin="miter"/><line x1="3.2" y1="4" x2="3.2" y2="11" stroke="#8C8CB0" stroke-width="0.9"/></svg>
<div style="left:379px;top:499px;width:1px;height:15px;background:#000028;"></div>
<svg style="left:524px;top:499px" width="16" height="16" viewBox="0 0 16 16" shape-rendering="crispEdges">
<rect x="1" y="0" width="15" height="16" fill="#A7A791"/>
<rect x="8" y="4" width="6" height="1" fill="#7E7E8C"/><rect x="8" y="9" width="6" height="1" fill="#7E7E8C"/>
<rect x="14" y="0" width="1" height="15" fill="#7E7E8C"/><rect x="1" y="14" width="14" height="1" fill="#7E7E8C"/>
<rect x="4" y="1" width="3" height="11" fill="#7E7E8C"/><rect x="0" y="5" width="11" height="3" fill="#7E7E8C"/>
<rect x="5" y="2" width="1" height="9" fill="#A7A791"/><rect x="1" y="6" width="9" height="1" fill="#A7A791"/>
<rect x="11" y="11" width="1" height="3" fill="#7E7E8C"/><rect x="12" y="11" width="2" height="1" fill="#7E7E8C"/><rect x="12" y="13" width="2" height="1" fill="#7E7E8C"/>
</svg>
<svg style="left:603px;top:499px" width="17" height="16" viewBox="0 0 17 16">
<g shape-rendering="crispEdges"><rect x="2" y="0" width="14" height="15" fill="#B4B4A4"/>
<rect x="2" y="0" width="13" height="1" fill="#fff"/><rect x="2" y="0" width="1" height="14" fill="#fff"/>
<rect x="15" y="0" width="1" height="15" fill="#000050"/><rect x="2" y="14" width="14" height="1" fill="#000050"/>
<rect x="10" y="4" width="5" height="1" fill="#000050"/><rect x="10" y="5" width="5" height="1" fill="#fff"/>
<rect x="9" y="9" width="6" height="1" fill="#000050"/><rect x="9" y="10" width="6" height="1" fill="#fff"/></g>
<path d="M1 3.2L10 11.2M9 3.2L1 10.5" stroke="#D40010" stroke-width="2" fill="none"/>
</svg>
<svg style="left:683px;top:499px" width="18" height="16" viewBox="0 0 18 16">
<circle cx="11.2" cy="2.3" r="1.7" fill="#80808C"/>
<path d="M10.5 4 L8 6.5 L8.2 10 L10.5 10.5 L12.2 8 L12.5 5.5 Z" fill="#80808C"/>
<path d="M12 6.2 L14.5 6 L16.2 3.3" stroke="#80808C" stroke-width="1.2" fill="none"/>
<path d="M9.5 4.6 L6 4.4 L4 5.2" stroke="#80808C" stroke-width="1.3" fill="none"/>
<path d="M9 9.5 L6 10.8 L4 10.5 L2.8 13.2" stroke="#80808C" stroke-width="1.7" fill="none"/>
<path d="M11 9 L12.6 10.4 L12.6 13.6 L15 14.6" stroke="#80808C" stroke-width="1.8" fill="none"/>
<path d="M2.5 4.6H8M1.8 6.6H8M1 8.8H8" stroke="#80808C" stroke-width="0.9" fill="none"/>
</svg>
<div id="txt"><span class="tt" style="left:25px;letter-spacing:0.27px">Unterprojekt</span>
<span class="tt" style="left:111px;">-</span>
<span class="tt" style="left:119px;letter-spacing:-0.2px">Einstellungen</span>
<span class="t" style="left:18px;top:37px;color:#000;letter-spacing:0.108px;">Abmaße</span>
<span class="t" style="left:28px;top:63px;color:#000;letter-spacing:0.191px;">Schrank-Höhe</span>
<span class="t" style="left:42px;top:88px;color:#000;letter-spacing:0.568px;">1900 mm</span>
<span class="t" style="left:42px;top:113px;color:#000;letter-spacing:0.568px;">2200 mm</span>
<span class="t" style="left:147px;top:63px;color:#000;letter-spacing:0.1px;">Schrank-Tiefe</span>
<span class="t" style="left:161px;top:88px;color:#000;letter-spacing:0.609px;">800 mm</span>
<span class="t" style="left:161px;top:113px;color:#000;letter-spacing:0.609px;">600 mm</span>
<span class="t" style="left:161px;top:138px;color:#ACA899;letter-spacing:0.609px;text-shadow:1px 1px 0 #fff;">400 mm</span>
<span class="t" style="left:28px;top:166px;color:#000;letter-spacing:0.118px;">Sockel-Höhe</span>
<span class="t" style="left:42px;top:191px;color:#000;letter-spacing:0.609px;">100 mm</span>
<span class="t" style="left:42px;top:216px;color:#000;letter-spacing:0.609px;">200 mm</span>
<span class="t" style="left:37px;top:247px;color:#ACA899;letter-spacing:0.134px;text-shadow:1px 1px 0 #fff;">automatische Korrektur</span>
<span class="t" style="left:269px;top:37px;color:#000;letter-spacing:0.14px;">elektr. Einstellungen</span>
<span class="t" style="left:238.5px;width:200px;text-align:center;top:66px;color:#000;letter-spacing:0.082px;">Gleichz.</span>
<span class="t" style="right:342px;top:85px;color:#fff;letter-spacing:0.161px;">0,90</span>
<span class="t" style="right:342px;top:102px;color:#000;letter-spacing:0.161px;">1,00</span>
<span class="t" style="left:275px;top:195px;color:#000;letter-spacing:0.041px;">Netzform</span>
<span class="t" style="left:289px;top:220px;color:#000;letter-spacing:0.089px;">4pol. (PEN)</span>
<span class="t" style="left:289px;top:245px;color:#000;letter-spacing:0.054px;">5pol. (PE/N)</span>
<span class="t" style="left:434px;top:37px;color:#000;letter-spacing:0.255px;">allgemeine Angaben</span>
<span class="t" style="left:435px;top:62px;color:#000;letter-spacing:0.238px;">Bezeichnung</span>
<span class="t" style="left:437px;top:85px;color:#000;letter-spacing:0.081px;">UV 3</span>
<span class="t" style="left:435px;top:112px;color:#000;letter-spacing:0.301px;">Beschreibung</span>
<span class="m" style="left:437px;top:136px">UV Kellerbereich</span>
<span class="t" style="left:15px;top:284px;color:#000;letter-spacing:0.483px;">Einspeisungen</span>
<span class="t" style="left:-25.5px;width:200px;text-align:center;top:309px;color:#000;letter-spacing:0.349px;">Versorgungsebene</span>
<span class="t" style="left:85.5px;width:200px;text-align:center;top:309px;color:#000;letter-spacing:0.219px;">Quelle</span>
<span class="t" style="left:261.5px;width:200px;text-align:center;top:309px;color:#000;letter-spacing:0.085px;">Einspeisung als ...</span>
<span class="t" style="left:427.5px;width:200px;text-align:center;top:309px;color:#000;letter-spacing:-0.001px;">Strom</span>
<span class="t" style="left:508.5px;width:200px;text-align:center;top:309px;color:#000;letter-spacing:0.329px;">Einspeisung</span>
<span class="t" style="left:589.5px;width:200px;text-align:center;top:309px;color:#000;letter-spacing:0.271px;">Abgang</span>
<span class="t" style="left:14px;top:328px;color:#fff;letter-spacing:-0.004px;">AV</span>
<span class="t" style="left:135px;top:328px;color:#fff;letter-spacing:0.163px;">Verteilung 2</span>
<span class="t" style="left:237px;top:328px;color:#fff;letter-spacing:0.086px;">Leistungsschalter &lt;60kA Motorantrieb/Feste...</span>
<span class="t" style="right:177px;top:328px;color:#fff;letter-spacing:0.216px;">324,25</span>
<span class="t" style="right:96px;top:328px;color:#fff;letter-spacing:0.216px;">400,00</span>
<span class="t" style="right:15px;top:328px;color:#fff;letter-spacing:0.216px;">400,00</span>
<span class="t" style="left:14px;top:345px;color:#000;letter-spacing:0.119px;">Profibus-DP</span>
<span class="t" style="left:135px;top:345px;color:#000;letter-spacing:0.163px;">Verteilung 2</span>
<span class="t" style="right:177px;top:345px;color:#000;letter-spacing:0.161px;">0,00</span>
<span class="t" style="right:96px;top:345px;color:#000;letter-spacing:0.161px;">0,00</span>
<span class="t" style="right:15px;top:345px;color:#000;letter-spacing:0.161px;">0,00</span>
<span class="t" style="left:111.5px;width:200px;text-align:center;top:376px;color:#000;letter-spacing:0.326px;">1</span>
<span class="t" style="left:15px;top:412px;color:#000;letter-spacing:0.092px;">Abgänge zu anderen Verteilungen</span>
<span class="t" style="left:-25.5px;width:200px;text-align:center;top:437px;color:#000;letter-spacing:0.349px;">Versorgungsebene</span>
<span class="t" style="left:85.5px;width:200px;text-align:center;top:437px;color:#000;letter-spacing:0.166px;">Ziel</span>
<span class="t" style="left:261.5px;width:200px;text-align:center;top:437px;color:#000;letter-spacing:0.044px;">Abgang als ...</span>
<span class="t" style="left:427.5px;width:200px;text-align:center;top:437px;color:#000;letter-spacing:-0.001px;">Strom</span>
<span class="t" style="left:508.5px;width:200px;text-align:center;top:437px;color:#000;letter-spacing:0.329px;">Einspeisung</span>
<span class="t" style="left:589.5px;width:200px;text-align:center;top:437px;color:#000;letter-spacing:0.271px;">Abgang</span>
<span class="t" style="left:14px;top:456px;color:#fff;letter-spacing:-0.004px;">AV</span>
<span class="t" style="left:135px;top:456px;color:#fff;letter-spacing:0.163px;">Verteilung 6</span>
<span class="t" style="left:237px;top:456px;color:#fff;letter-spacing:0.156px;">Leistungsschalter &lt;60kA Handantrieb/Feste...</span>
<span class="t" style="right:177px;top:456px;color:#fff;letter-spacing:0.216px;">250,00</span>
<span class="t" style="right:96px;top:456px;color:#fff;letter-spacing:0.216px;">250,00</span>
<span class="t" style="right:15px;top:456px;color:#fff;letter-spacing:0.216px;">250,00</span>
<span class="t" style="left:14px;top:473px;color:#000;letter-spacing:0.119px;">Profibus-DP</span>
<span class="t" style="left:135px;top:473px;color:#000;letter-spacing:0.163px;">Verteilung 6</span>
<span class="t" style="right:177px;top:473px;color:#000;letter-spacing:0.161px;">0,00</span>
<span class="t" style="right:96px;top:473px;color:#000;letter-spacing:0.161px;">0,00</span>
<span class="t" style="right:15px;top:473px;color:#000;letter-spacing:0.161px;">0,00</span>
<span class="t" style="left:111.5px;width:200px;text-align:center;top:501px;color:#000;letter-spacing:0.326px;">1</span></div>
</div>
</body></html>
